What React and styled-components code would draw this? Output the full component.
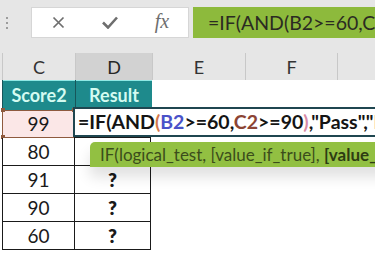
import React from 'react';
import styled, { createGlobalStyle } from 'styled-components';

const GlobalStyle = createGlobalStyle`
    body {
        margin: 0;
        background: #ffffff;
        font-family: Lato, "Open Sans", sans-serif;
    }
`;

const columns = [
    { key: 'C', width: 73 },
    { key: 'D', width: 77, selected: true },
    { key: 'E', width: 93 },
    { key: 'F', width: 92 },
    { key: 'G', width: 92 },
];

const rows = [
    { score: '99', result: '', ref: true },
    { score: '80', result: '' },
    { score: '91', result: '?' },
    { score: '90', result: '?' },
    { score: '60', result: '?' },
];

const App = () => {
    return (
        <Page>
            <GlobalStyle />
            <Toolbar>
                <Grip>
                    <span />
                    <span />
                    <span />
                </Grip>
                <ActionBox>
                    <svg width="13" height="13" viewBox="0 0 13 13">
                        <path d="M1.5 1.5 L11.5 11.5 M11.5 1.5 L1.5 11.5" stroke="#6e6e6e" strokeWidth="1.7" fill="none" />
                    </svg>
                    <svg width="16" height="13" viewBox="0 0 16 13">
                        <path d="M1 6.5 L6 11.5 L15 1.5" stroke="#6e6e6e" strokeWidth="2.6" fill="none" />
                    </svg>
                    <Fx>fx</Fx>
                </ActionBox>
                <FormulaBar>=IF(AND(B2&gt;=60,C2&gt;=90),"Pass","Fail")</FormulaBar>
            </Toolbar>

            <Sheet>
                <HeaderRow>
                    <EdgeHead />
                    {columns.map((c) => (
                        <ColHead key={c.key} $w={c.width} $selected={c.selected}>
                            {c.key}
                        </ColHead>
                    ))}
                </HeaderRow>

                <Row $h={30}>
                    <Edge />
                    <TitleCell $w={73}>Score2</TitleCell>
                    <TitleCell $w={77}>Result</TitleCell>
                </Row>

                {rows.map((r, i) => (
                    <Row key={i} $h={28}>
                        <Edge />
                        <Cell $w={73} $ref={r.ref}>
                            {r.score}
                            {r.ref && (
                                <>
                                    <Handle $top $left />
                                    <Handle $left />
                                    <Handle $top />
                                </>
                            )}
                        </Cell>
                        <Cell $w={77} $bold>
                            {r.result}
                        </Cell>
                    </Row>
                ))}

                <EditCell>
                    =IF(AND<Paren $c="#d4784a">(</Paren>
                    <Ref $c="#4a52c9">B2</Ref>&gt;=60,
                    <Ref $c="#8c4434">C2</Ref>&gt;=90
                    <Paren $c="#d78aa6">)</Paren>,"Pass","Fail")
                </EditCell>

                <Tip>
                    IF(logical_test, [value_if_true], <b>[value_if_false]</b>)
                </Tip>
            </Sheet>
        </Page>
    );
};

// ======  STYLES  ======

const Page = styled.div`
    width: 375px;
    height: 275px;
    overflow: hidden;
    background: #ffffff;
`;

const Toolbar = styled.div`
    height: 53px;
    background: #e6e6e6;
    display: flex;
    align-items: flex-start;
    padding-top: 7px;
    box-sizing: border-box;
`;

const Grip = styled.div`
    width: 31px;
    height: 31px;
    display: flex;
    flex-direction: column;
    align-items: center;
    justify-content: center;
    gap: 3px;
    padding-right: 17px;
    box-sizing: border-box;

    span {
        width: 2px;
        height: 2px;
        background: #9c9c9c;
    }
`;

const ActionBox = styled.div`
    width: 158px;
    height: 31px;
    background: #ffffff;
    border: 1px solid #d6d6d6;
    box-sizing: border-box;
    display: grid;
    grid-template-columns: repeat(3, 1fr);
    align-items: center;
    justify-items: center;
`;

const Fx = styled.span`
    font-family: "Liberation Serif", serif;
    font-style: italic;
    font-size: 20px;
    color: #6e6e6e;
    margin-top: -3px;
`;

const FormulaBar = styled.div`
    flex: 1;
    height: 31px;
    margin-left: 4px;
    background: #8dba3c;
    color: #2b2b22;
    font-size: 19.5px;
    line-height: 31px;
    padding-left: 15px;
    white-space: nowrap;
    overflow: hidden;
`;

const Sheet = styled.div`
    position: relative;
`;

const HeaderRow = styled.div`
    display: flex;
    height: 27px;
    background: #e6e6e6;
`;

const EdgeHead = styled.div`
    width: 2px;
    flex-shrink: 0;
    border-right: 1px solid #c8c8c8;
`;

const ColHead = styled.div`
    width: ${(p) => p.$w}px;
    flex-shrink: 0;
    box-sizing: border-box;
    border-right: 1px solid #c8c8c8;
    background: ${(p) => (p.$selected ? '#d2d2d2' : '#e6e6e6')};
    color: ${(p) => (p.$selected ? '#262626' : '#333333')};
    font-size: 18px;
    line-height: 28px;
    text-align: center;
`;

const Row = styled.div`
    display: flex;
    height: ${(p) => p.$h}px;
`;

const Edge = styled.div`
    width: 2px;
    flex-shrink: 0;
`;

const TitleCell = styled.div`
    width: ${(p) => p.$w}px;
    flex-shrink: 0;
    box-sizing: border-box;
    background: #1e8a8c;
    border-left: 1px solid #17565a;
    box-shadow: inset 0 1px 0 #8fe8e4;
    color: #d4fbf1;
    font-weight: 700;
    font-size: 18px;
    line-height: 30px;
    text-align: center;
`;

const Cell = styled.div`
    position: relative;
    width: ${(p) => p.$w}px;
    flex-shrink: 0;
    box-sizing: border-box;
    border-left: 1px solid ${(p) => (p.$ref ? '#8e5a3e' : '#1a1a1a')};
    border-right: 1px solid #1a1a1a;
    border-bottom: 1px solid ${(p) => (p.$ref ? '#8e5a3e' : '#1a1a1a')};
    box-shadow: ${(p) => (p.$ref ? 'inset 0 1px 0 #8e5a3e' : 'none')};
    margin-right: -1px;
    background: ${(p) => (p.$ref ? '#fbe7e7' : '#ffffff')};
    color: #1a1a1a;
    font-weight: ${(p) => (p.$bold ? 800 : 400)};
    font-size: 19px;
    line-height: 27px;
    text-align: center;
`;

const Handle = styled.span`
    position: absolute;
    width: 4px;
    height: 4px;
    background: #8e5a3e;
    left: ${(p) => (p.$left ? '-2px' : 'auto')};
    right: ${(p) => (p.$left ? 'auto' : '-2px')};
    top: ${(p) => (p.$top ? '-2px' : 'auto')};
    bottom: ${(p) => (p.$top ? 'auto' : '-2px')};
`;

const EditCell = styled.div`
    position: absolute;
    left: 73px;
    right: -40px;
    top: 54px;
    height: 30px;
    box-sizing: border-box;
    border: 2px solid #1f4650;
    background: #ffffff;
    color: #141414;
    font-weight: 700;
    font-size: 19.5px;
    line-height: 26px;
    padding-left: 3px;
    white-space: nowrap;
    overflow: hidden;
`;

const Paren = styled.span`
    color: ${(p) => p.$c};
`;

const Ref = styled.span`
    color: ${(p) => p.$c};
`;

const Tip = styled.div`
    position: absolute;
    left: 90px;
    right: -60px;
    top: 89px;
    height: 25px;
    background: #92c042;
    border-top-left-radius: 5px;
    box-shadow: 0 10px 14px rgba(0, 0, 0, 0.12);
    color: #3b4d1b;
    font-size: 17px;
    line-height: 25px;
    padding-left: 10px;
    white-space: nowrap;
    overflow: hidden;

    b {
        color: #2d3c12;
    }
`;

export default App;
